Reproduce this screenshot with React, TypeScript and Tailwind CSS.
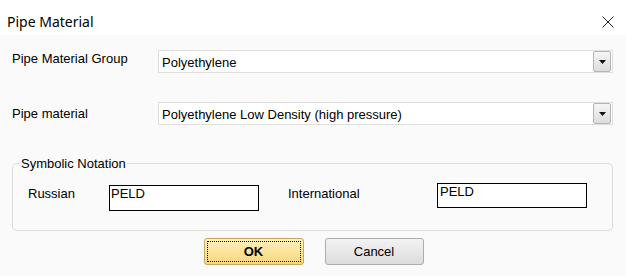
import React from 'react';

function Combo({ value }: { value: string }) {
  return (
    <div className="flex h-[23px] w-[455px] items-center border border-[#dedede] bg-white pl-[3px] pr-[1px]">
      <span className="flex-1 pt-[2px] text-[13px] leading-[15px] text-black">{value}</span>
      <div className="flex h-[21px] w-[18px] items-center justify-center rounded-[2px] border border-[#b4b4b4] bg-gradient-to-b from-[#f6f6f6] to-[#dcdcdc]">
        <svg width="7" height="4" viewBox="0 0 7 4">
          <path d="M0 0h7L3.5 4z" fill="#111" />
        </svg>
      </div>
    </div>
  );
}

export default function App() {
  return (
    <div className="flex h-[276px] w-[626px] flex-col bg-[#fafafa] font-['Liberation_Sans',Arial,sans-serif] text-black">
      {/* title bar */}
      <div className="flex h-[35px] items-center justify-between bg-white pl-[7px] pr-[12px] pt-[8px]">
        <span className="font-['Noto_Sans',sans-serif] text-[14px] text-black">Pipe Material</span>
        <svg width="12" height="12" viewBox="0 0 12 12">
          <path d="M0.5 0.5L11.5 11.5M11.5 0.5L0.5 11.5" stroke="#222" strokeWidth="1" />
        </svg>
      </div>

      <div className="flex flex-col px-[12px] pt-[15px]">
        <div className="flex items-center">
          <span className="mb-[6px] w-[146px] text-[13px] leading-[15px]">Pipe Material Group</span>
          <Combo value="Polyethylene" />
        </div>
        <div className="mt-[29px] flex items-center">
          <span className="w-[146px] text-[13px] leading-[15px]">Pipe material</span>
          <Combo value="Polyethylene Low Density (high pressure)" />
        </div>

        <fieldset className="mt-[31px] w-[601px] rounded-[5px] border border-[#dcdcdc] pb-[19px] pl-[15px]">
          <legend className="-ml-[8px] px-[1px] text-[13px] leading-[15px]">Symbolic Notation</legend>
          <div className="mt-[12px] flex items-start">
            <span className="mt-[1px] w-[81px] text-[13px]">Russian</span>
            <div className="mt-[2px] h-[26px] w-[150px] border border-black bg-white pl-[1px] text-[13px] leading-[16px]">PELD</div>
            <span className="ml-[29px] mt-[1px] w-[149px] text-[13px]">International</span>
            <div className="h-[25px] w-[150px] border border-black bg-white pl-[2px] text-[13px] leading-[16px]">PELD</div>
          </div>
        </fieldset>

        <div className="mt-[7px] flex justify-center gap-[21px] pl-[1px]">
          <button className="flex h-[27px] w-[100px] items-center justify-center rounded-[3px] border border-[#c9a65c] bg-gradient-to-b from-[#fff1bd] to-[#f8d57c] p-[2px]">
            <span className="flex h-full w-full items-center justify-center border border-dotted border-black text-[13px] font-bold">OK</span>
          </button>
          <button className="h-[27px] w-[99px] rounded-[3px] border border-[#adadad] bg-gradient-to-b from-[#f3f3f3] to-[#dcdcdc] text-[13px]">
            Cancel
          </button>
        </div>
      </div>
    </div>
  );
}
